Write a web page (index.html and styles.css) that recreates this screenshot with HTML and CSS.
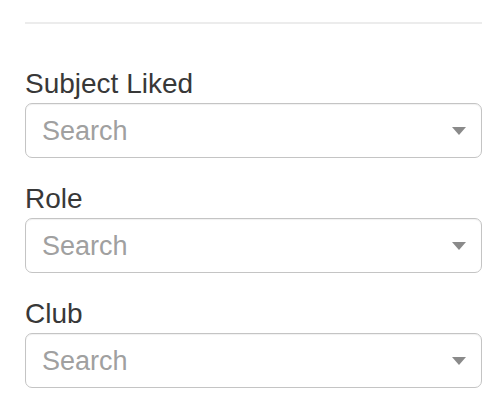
FILE: index.html
```html
<!DOCTYPE html>
<html>
<head>
<meta charset="utf-8">
<link rel="stylesheet" href="styles.css">
</head>
<body>
<div class="panel">
  <div class="divider"></div>
  <div class="fields">
    <div class="field">
      <label class="label">Subject Liked</label>
      <div class="select">
        <span class="placeholder">Search</span>
        <span class="caret"></span>
      </div>
    </div>
    <div class="field">
      <label class="label">Role</label>
      <div class="select">
        <span class="placeholder">Search</span>
        <span class="caret"></span>
      </div>
    </div>
    <div class="field">
      <label class="label">Club</label>
      <div class="select">
        <span class="placeholder">Search</span>
        <span class="caret"></span>
      </div>
    </div>
  </div>
</div>
</body>
</html>
```

FILE: styles.css
```css
html, body {
  margin: 0;
  padding: 0;
  background: #ffffff;
}
body {
  font-family: "Liberation Sans", Arial, Helvetica, sans-serif;
  width: 504px;
  height: 412px;
  overflow: hidden;
}
.panel {
  padding: 22px 22px 0 25px;
  display: flex;
  flex-direction: column;
}
.divider {
  height: 2px;
  background: #ececec;
}
.fields {
  margin-top: 44px;
  display: flex;
  flex-direction: column;
  gap: 25px;
}
.field {
  display: flex;
  flex-direction: column;
}
.label {
  font-size: 28px;
  line-height: 32px;
  color: #383838;
  margin-bottom: 3px;
}
.select {
  height: 53px;
  border: 1px solid #c4c4c4;
  border-radius: 7px;
  display: flex;
  align-items: center;
  justify-content: space-between;
  padding: 0 15px 0 16px;
  box-shadow: inset 0 1px 1px rgba(0,0,0,0.06);
}
.placeholder {
  font-size: 27px;
  color: #a0a0a0;
  line-height: 1;
  padding-top: 2px;
}
.caret {
  width: 0;
  height: 0;
  border-left: 7px solid transparent;
  border-right: 7px solid transparent;
  border-top: 8px solid #8a8a8a;
}
```
